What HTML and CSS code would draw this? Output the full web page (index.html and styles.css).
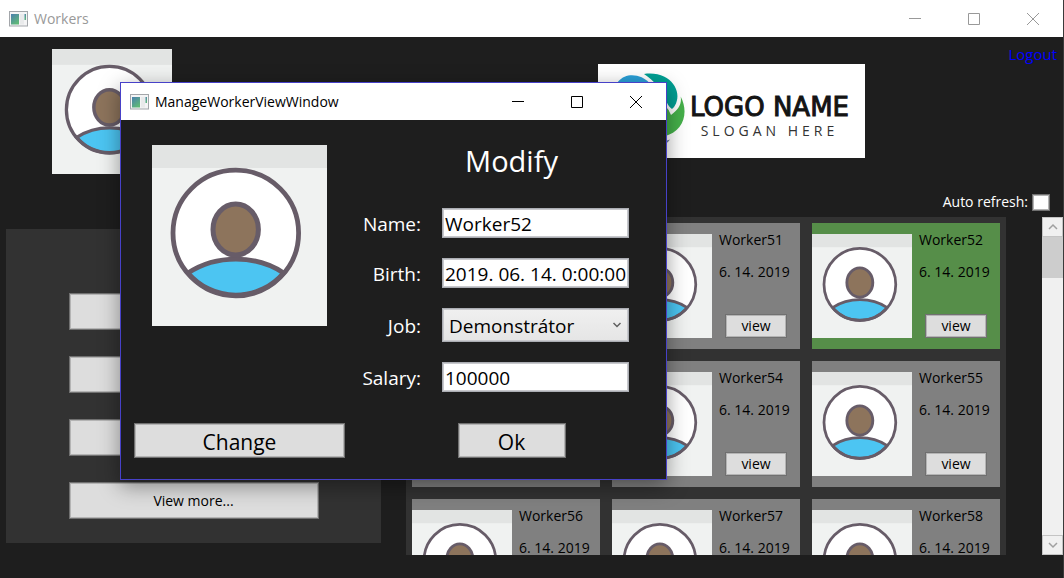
FILE: index.html
```html
<!DOCTYPE html>
<html lang="en">
<head>
<meta charset="utf-8">
<title>Workers</title>
<link rel="stylesheet" href="styles.css">
</head>
<body>
<svg class="defs" aria-hidden="true">
  <defs>
    <linearGradient id="app-fill" x1="0" y1="0" x2="0.6" y2="1">
      <stop offset="0" stop-color="#4a7fae"/>
      <stop offset="1" stop-color="#5fb878"/>
    </linearGradient>
    <symbol id="app-icon" viewBox="0 0 19 16">
      <rect x="0.5" y="0.5" width="18" height="14.5" fill="#f4f4f5" stroke="#a3a6aa"/>
      <rect x="2" y="3" width="8" height="10.5" fill="url(#app-fill)"/>
      <rect x="11" y="3" width="4" height="10.5" fill="#e9eaeb"/>
      <rect x="15.5" y="3" width="1.5" height="6" fill="url(#app-fill)"/>
    </symbol>
    <symbol id="avatar" viewBox="0 0 175 181" preserveAspectRatio="none">
      <rect width="175" height="181" fill="#f0f2f1"/>
      <rect width="175" height="23" fill="#e2e4e3"/>
      <circle cx="83.8" cy="88" r="62.8" fill="#fff"/>
      <path d="M36 128C64 109.500 104 109.500 131.600 128A62.800 62.800 0 0 1 36 128Z" fill="#4cc5f2" stroke="#675c68" stroke-width="4.800"/>
      <ellipse cx="83.7" cy="84.5" rx="22.7" ry="25.500" fill="#8d745c" stroke="#675c68" stroke-width="5"/>
      <circle cx="83.8" cy="88" r="62.8" fill="none" stroke="#675c68" stroke-width="4.800"/>
    </symbol>
  </defs>
</svg>

<header class="titlebar titlebar-inactive">
  <svg class="app-icon"><use href="#app-icon"/></svg>
  <span class="titlebar-text">Workers</span>
  <button class="caption-button" aria-label="Minimize"><svg viewBox="0 0 12 12"><path d="M0 5.500H12"/></svg></button>
  <button class="caption-button" aria-label="Maximize"><svg viewBox="0 0 12 12"><path d="M.5.5H11.500V11.500H.5Z"/></svg></button>
  <button class="caption-button" aria-label="Close"><svg viewBox="0 0 12 12"><path d="M0 0L12 12M12 0L0 12"/></svg></button>
</header>

<main class="workspace">
  <section class="side">
    <svg class="profile-picture" role="img" aria-label="Profile"><use href="#avatar"/></svg>
    <nav class="menu">
      <button class="button menu-button" aria-label="Add worker"></button>
      <button class="button menu-button" aria-label="Modify worker"></button>
      <button class="button menu-button" aria-label="Delete worker"></button>
      <button class="button menu-button">View more...</button>
    </nav>
  </section>

  <section class="content">
    <div class="banner">
      <a class="logout" href="#logout">Logout</a>
      <div class="logo">
        <svg class="logo-mark" viewBox="0 0 90 93" aria-hidden="true">
          <path d="M14 40C14 3 42 8 51 18C65 34 60 50 55 62C50 40 30 28 14 40Z" fill="#2a9fd6"/>
          <path d="M46 9.500C72 6 84 26 78 39Q76.500 42.500 74 44.500C66 39 68 24 46 9.500Z" fill="#009f93"/>
          <path d="M82.700 32C91 48 86 67 66 72C52 75 40 70 34 62C52 66 70 58 67 41Q71 45 73 50.500C80 45 84 40 82.700 32Z" fill="#45b04a"/>
          <path d="M66 77L72 75L69.500 78Z" fill="#687a9d"/>
        </svg>
        <div class="logo-words">
          <span class="logo-name">LOGO NAME</span>
          <span class="logo-slogan">SLOGAN HERE</span>
        </div>
      </div>
    </div>
    <div class="refresh">
      <label for="auto-refresh">Auto refresh:</label>
      <input id="auto-refresh" class="checkbox" type="checkbox">
    </div>
    <div class="scroll-view">
      <div class="cards">
        <article class="card"><svg class="card-picture"><use href="#avatar"/></svg><div class="card-info"><span>Worker50</span><span>6. 14. 2019</span><button class="button view-button">view</button></div></article>
        <article class="card"><svg class="card-picture"><use href="#avatar"/></svg><div class="card-info"><span>Worker51</span><span>6. 14. 2019</span><button class="button view-button">view</button></div></article>
        <article class="card card-selected"><svg class="card-picture"><use href="#avatar"/></svg><div class="card-info"><span>Worker52</span><span>6. 14. 2019</span><button class="button view-button">view</button></div></article>
        <article class="card"><svg class="card-picture"><use href="#avatar"/></svg><div class="card-info"><span>Worker53</span><span>6. 14. 2019</span><button class="button view-button">view</button></div></article>
        <article class="card"><svg class="card-picture"><use href="#avatar"/></svg><div class="card-info"><span>Worker54</span><span>6. 14. 2019</span><button class="button view-button">view</button></div></article>
        <article class="card"><svg class="card-picture"><use href="#avatar"/></svg><div class="card-info"><span>Worker55</span><span>6. 14. 2019</span><button class="button view-button">view</button></div></article>
        <article class="card"><svg class="card-picture"><use href="#avatar"/></svg><div class="card-info"><span>Worker56</span><span>6. 14. 2019</span><button class="button view-button">view</button></div></article>
        <article class="card"><svg class="card-picture"><use href="#avatar"/></svg><div class="card-info"><span>Worker57</span><span>6. 14. 2019</span><button class="button view-button">view</button></div></article>
        <article class="card"><svg class="card-picture"><use href="#avatar"/></svg><div class="card-info"><span>Worker58</span><span>6. 14. 2019</span><button class="button view-button">view</button></div></article>
      </div>
      <div class="scrollbar">
        <button class="scroll-arrow" aria-label="Scroll up"><svg viewBox="0 0 10 8"><path d="M1 6L5 2L9 6"/></svg></button>
        <div class="scroll-track"><div class="scroll-thumb"></div></div>
        <button class="scroll-arrow" aria-label="Scroll down"><svg viewBox="0 0 10 8"><path d="M1 2L5 6L9 2"/></svg></button>
      </div>
    </div>
  </section>
</main>

<div class="dialog" role="dialog" aria-label="ManageWorkerViewWindow">
  <header class="titlebar">
    <svg class="app-icon"><use href="#app-icon"/></svg>
    <span class="titlebar-text">ManageWorkerViewWindow</span>
    <button class="caption-button" aria-label="Minimize"><svg viewBox="0 0 12 12"><path d="M0 5.500H12"/></svg></button>
    <button class="caption-button" aria-label="Maximize"><svg viewBox="0 0 12 12"><path d="M.5.5H11.500V11.500H.5Z"/></svg></button>
    <button class="caption-button" aria-label="Close"><svg viewBox="0 0 12 12"><path d="M0 0L12 12M12 0L0 12"/></svg></button>
  </header>
  <div class="dialog-body">
    <div class="dialog-picture">
      <svg class="worker-picture" role="img" aria-label="Worker picture"><use href="#avatar"/></svg>
      <button class="button dialog-button">Change</button>
    </div>
    <form class="dialog-form">
      <h1 class="dialog-title">Modify</h1>
      <div class="fields">
        <label for="name">Name:</label>
        <input id="name" class="field" type="text" value="Worker52">
        <label for="birth">Birth:</label>
        <input id="birth" class="field" type="text" value="2019. 06. 14. 0:00:00">
        <label for="job">Job:</label>
        <div class="select-box">
          <select id="job" class="field select"><option>Demonstrátor</option></select>
          <svg class="select-arrow" viewBox="0 0 10 8" aria-hidden="true"><path d="M1.500 2L5 5.500L8.500 2"/></svg>
        </div>
        <label for="salary">Salary:</label>
        <input id="salary" class="field" type="text" value="100000">
      </div>
      <button class="button dialog-button ok-button" type="button">Ok</button>
    </form>
  </div>
</div>
</body>
</html>
```
FILE: styles.css
```css
* { box-sizing: border-box; }

body {
  margin: 0;
  height: 100vh;
  display: flex;
  flex-direction: column;
  overflow: hidden;
  border-right: 1px solid #3a3a3a;
  background: #1e1e1e;
  color: #000;
  font: 14px/20px "Open Sans", "Noto Sans", sans-serif;
}

button, input, select { font: inherit; color: inherit; margin: 0; }
.defs { position: absolute; width: 0; height: 0; }

/* Window caption */
.titlebar {
  display: flex;
  align-items: center;
  height: 37px;
  flex: none;
  padding: 0 1px 0 9px;
  background: #fff;
}
.titlebar-inactive { color: #999; }
.app-icon { width: 19px; height: 16px; }
.titlebar-text { flex: 1; margin-left: 6px; }
.caption-button {
  width: 59px;
  height: 37px;
  padding: 0;
  border: 0;
  background: none;
  display: grid;
  place-items: center;
}
.caption-button svg {
  width: 12px;
  height: 12px;
  fill: none;
  stroke: currentColor;
  stroke-width: 1;
}

.button {
  padding: 0;
  border: 1px solid #707070;
  background: #ddd;
  box-shadow: inset 0 0 0 1px #b4b4b4;
}

/* Main window */
.workspace {
  flex: 1;
  min-height: 0;
  display: grid;
  grid-template-columns: 400fr 663fr;
}
.side {
  display: flex;
  flex-direction: column;
  padding: 12px 19px 35px 6px;
}
.profile-picture { width: 120px; height: 125px; margin-left: 46px; flex: none; }
.menu {
  flex: 1;
  display: flex;
  flex-direction: column;
  align-items: center;
  gap: 26px;
  margin-top: 55px;
  padding-top: 64px;
  background: #323232;
}
.menu-button { width: 250px; height: 37px; flex: none; }

.content {
  display: flex;
  flex-direction: column;
  min-height: 0;
  padding-bottom: 23px;
}
.banner { padding: 7px 6px 0; display: flex; flex-direction: column; }
.logout {
  align-self: flex-end;
  color: #00f;
  font-size: 15px;
  text-decoration: none;
}
.logo {
  align-self: center;
  display: flex;
  width: 267px;
  height: 94px;
  background: #fff;
}
.logo-mark { width: 90px; height: 94px; }
.logo-words {
  flex: 1;
  display: flex;
  flex-direction: column;
  align-items: center;
  padding: 29px 14px 0 0;
}
.logo-name {
  font: 26px/28px "DejaVu Sans", sans-serif;
  color: #141414;
  -webkit-text-stroke: 1px #141414;
  white-space: nowrap;
}
.logo-slogan { font-size: 14px; color: #333; letter-spacing: 4px; white-space: nowrap; }

.refresh {
  display: flex;
  align-items: center;
  justify-content: flex-end;
  gap: 4px;
  margin-top: 34px;
  padding-right: 13px;
  color: #fff;
}
.checkbox {
  appearance: none;
  width: 18px;
  height: 17px;
  border: 1px solid #707070;
  background: #fff;
  box-shadow: inset 0 0 0 1px #b4b4b4;
}

.scroll-view {
  flex: 1;
  min-height: 0;
  display: flex;
  justify-content: space-between;
  gap: 36px;
  margin-top: 5px;
  padding-left: 6px;
  overflow: hidden;
}
.cards {
  flex: 1;
  display: grid;
  grid-template-columns: repeat(3, 1fr);
  grid-auto-rows: 126px;
  gap: 12px;
  padding: 6px;
  background: #323232;
}
.card {
  display: flex;
  gap: 7px;
  padding: 11px 0;
  background: #808080;
}
.card-selected { background: #568e49; }
.card-picture { width: 100px; height: 104px; flex: none; }
.card-info { display: flex; flex-direction: column; gap: 12px; margin-top: -4px; white-space: nowrap; }
.view-button { width: 62px; height: 24px; margin: auto 0 0 6px; }

.scrollbar { width: 21px; display: flex; flex-direction: column; background: #f0f0f0; }
.scroll-arrow {
  height: 20px;
  flex: none;
  padding: 0;
  display: grid;
  place-items: center;
  border: 1px solid #c4c4c4;
  background: #f0f0f0;
}
.scroll-arrow svg { width: 10px; height: 8px; fill: none; stroke: #a0a0a0; stroke-width: 1.5; }
.scroll-track { flex: 1; }
.scroll-thumb { height: 41px; background: #cdcdcd; }

/* Floating worker editor */
.dialog {
  position: absolute;
  left: 120px;
  top: 82px;
  width: 547px;
  border: 1px solid #4741c8;
  background: #1e1e1e;
  box-shadow: 0 6px 20px rgba(0, 0, 0, 0.4);
}
.dialog-body {
  display: grid;
  grid-template-columns: 211px 1fr;
  gap: 12px;
  padding: 21px 0 21px 13px;
}
.dialog-picture {
  display: flex;
  flex-direction: column;
  align-items: center;
  justify-content: space-between;
  padding-top: 4px;
}
.worker-picture { width: 175px; height: 181px; }
.dialog-button { width: 100%; height: 35px; padding-top: 2px; font-size: 21px; line-height: 28px; }
.dialog-form { display: flex; flex-direction: column; align-items: center; color: #fff; }
.dialog-title { margin: 0; font-size: 29px; line-height: 40px; font-weight: 400; }
.fields {
  align-self: stretch;
  display: grid;
  grid-template-columns: 64px 1fr;
  grid-template-rows: 30px 30px 34px 30px;
  gap: 20px 21px;
  align-items: center;
  margin-top: 27px;
  padding-right: 37px;
  font-size: 19px;
}
.fields label { padding-top: 2px; text-align: right; }
.field {
  width: 100%;
  height: 100%;
  padding: 2px 1px 0 2px;
  border: 1px solid #abadb3;
  border-radius: 0;
  background: #fff;
  color: #000;
  box-shadow: inset 0 0 0 1px #c8c9cd;
}
.select-box { position: relative; height: 100%; }
.select {
  appearance: none;
  padding: 2px 24px 0 6px;
  background: linear-gradient(#f0f0f0, #e5e5e5);
}
.select-arrow {
  position: absolute;
  right: 7px;
  top: 13px;
  width: 10px;
  height: 8px;
  fill: none;
  stroke: #606060;
  stroke-width: 1.5;
}
.ok-button { width: 108px; margin-top: 31px; color: #000; }
```
